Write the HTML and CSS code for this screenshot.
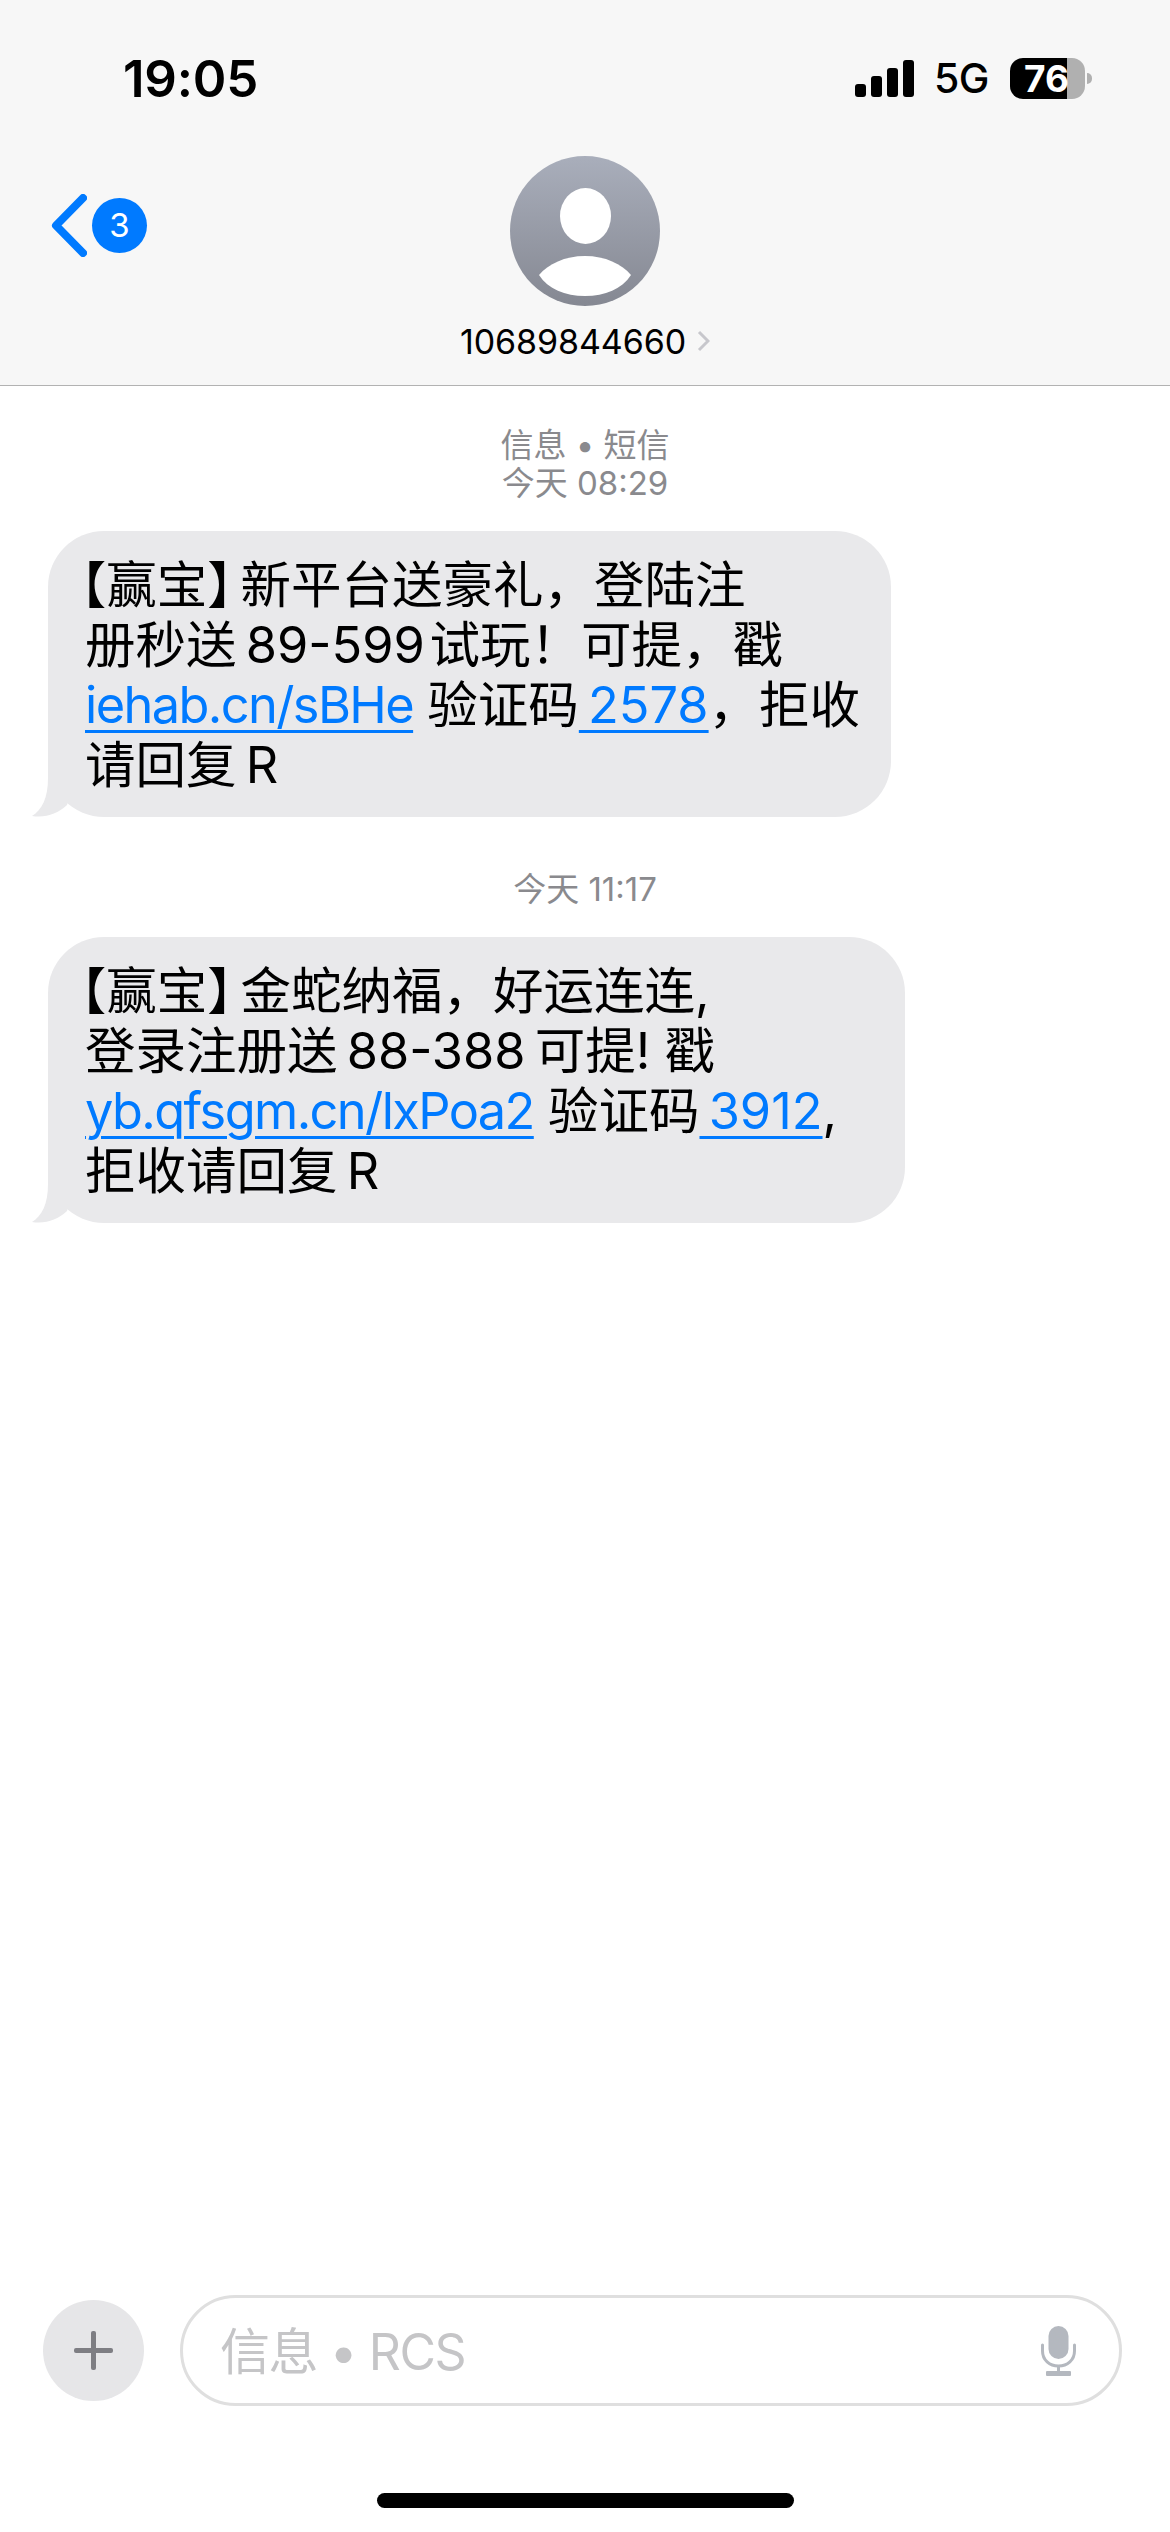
FILE: index.html
```html
<!DOCTYPE html>
<html lang="zh-CN">
<head>
    <meta charset="UTF-8">
    <meta name="viewport" content="width=device-width, initial-scale=1.0">
    <title>信息</title>
    <link rel="stylesheet" href="styles.css">
</head>
<body>
    <header class="top">
        <div class="status">
            <span class="time">19:05</span>
            <div class="status-right">
                <div class="signal"><i class="b1"></i><i class="b2"></i><i class="b3"></i><i class="b4"></i></div>
                <span class="net">5G</span>
                <div class="battery">76</div>
            </div>
        </div>
        <div class="nav">
            <div class="back">
                <svg class="chevron" width="36" height="63" viewBox="0 0 36 63"><polyline points="32,4 5,31.5 32,59" fill="none" stroke="#007aff" stroke-width="8" stroke-linecap="round" stroke-linejoin="round"/></svg>
                <span class="badge">3</span>
            </div>
            <div class="contact">
                <svg class="avatar" width="150" height="150" viewBox="0 0 150 150">
                    <defs><linearGradient id="avatar-bg" x1="0" y1="0" x2="0" y2="1"><stop offset="0" stop-color="#a9aebb"/><stop offset="1" stop-color="#858892"/></linearGradient></defs>
                    <circle cx="75" cy="75" r="75" fill="url(#avatar-bg)"/>
                    <ellipse cx="75.5" cy="60" rx="25.5" ry="28" fill="#fff"/>
                    <path d="M29 119 C38 108 55 100 75 100 C95 100 112 108 121 119 C112 133 95 140 75 140 C55 140 38 133 29 119 Z" fill="#fff"/>
                </svg>
                <div class="number">10689844660<svg class="number-arrow" width="13" height="22" viewBox="0 0 13 22"><polyline points="2,2 11,11 2,20" fill="none" stroke="#c7c7cc" stroke-width="3"/></svg></div>
            </div>
        </div>
    </header>

    <main class="thread">
        <p class="stamp stamp-first">信息 • 短信<br>今天 08:29</p>
        <div class="bubble bubble-a">
            <svg class="tail" width="40" height="60" viewBox="0 0 40 60"><path d="M16 0 V20 C16 40 10 52 0 58 C14 60 25 56 35 47 L40 30 V0 Z" fill="#e9e9eb"/></svg>
            <span class="tag">【赢宝】</span>新平台送豪礼，登陆注<br>
            册秒送&thinsp;89-599&hairsp;试玩！可提，戳<br>
            <a class="url" href="#">iehab.cn/sBHe</a> 验证码<a href="#">&thinsp;2578</a>，拒收<br>
            请回复&thinsp;R
        </div>
        <p class="stamp stamp-next">今天 11:17</p>
        <div class="bubble bubble-b">
            <svg class="tail" width="40" height="60" viewBox="0 0 40 60"><path d="M16 0 V20 C16 40 10 52 0 58 C14 60 25 56 35 47 L40 30 V0 Z" fill="#e9e9eb"/></svg>
            <span class="tag">【赢宝】</span>金蛇纳福，好运连连,<br>
            登录注册送&thinsp;88-388&thinsp;可提! 戳<br>
            <a class="url" href="#">yb.qfsgm.cn/lxPoa2</a> 验证码<a href="#">&thinsp;3912</a>,<br>
            拒收请回复&thinsp;R
        </div>
    </main>

    <footer class="composer">
        <div class="plus"><span></span></div>
        <div class="input">
            <span class="placeholder">信息 • RCS</span>
            <svg class="mic" width="35" height="50" viewBox="0 0 35 50">
                <rect x="7.5" y="0" width="20" height="33" rx="10" fill="#b4b8bf"/>
                <path d="M1.5 19 V25 C1.5 34 8.5 40 17.5 40 C26.5 40 33.5 34 33.5 25 V19" fill="none" stroke="#b4b8bf" stroke-width="3" stroke-linecap="round"/>
                <rect x="16" y="40" width="3" height="6" fill="#b4b8bf"/>
                <rect x="5" y="45" width="25" height="5" rx="1" fill="#b4b8bf"/>
            </svg>
        </div>
    </footer>
    <div class="home-bar"></div>
</body>
</html>
```

FILE: styles.css
```css
* { box-sizing: border-box; }
html, body { margin: 0; padding: 0; }
body { width: 1170px; height: 2532px; overflow: hidden; display: flex; flex-direction: column; background: #fff; color: #000; font-family: Inter, "Noto Sans CJK SC", sans-serif; }

.top { background: #f7f7f7; border-bottom: 1px solid #b2b2b2; height: 386px; }
.status { height: 156px; display: flex; justify-content: space-between; align-items: center; padding: 0 85px 0 123px; }
.time { font-size: 51px; font-weight: 600; letter-spacing: -0.2px; }
.status-right { display: flex; align-items: center; }
.signal { display: flex; align-items: flex-end; gap: 5px; height: 37px; margin-right: 20px; }
.signal i { display: block; width: 11px; background: #000; border-radius: 3px; }
.b1 { height: 13px; }
.b2 { height: 21px; }
.b3 { height: 29px; }
.b4 { height: 37px; }
.net { width: 55px; font-size: 41px; font-weight: 500; letter-spacing: -0.5px; margin-right: 21px; }
.battery { position: relative; width: 75px; height: 41px; line-height: 41px; padding-left: 14px; border-radius: 13px; background: linear-gradient(to right, #000 76%, #b0b0b0 76%); color: #fff; font-size: 37px; font-weight: 700; }
.battery::after { content: ""; position: absolute; left: 77px; top: 15px; width: 5px; height: 11px; border-radius: 0 5px 5px 0; background: #b0b0b0; }

.nav { display: grid; grid-template-columns: 1fr auto 1fr; }
.back { display: flex; align-items: center; align-self: start; gap: 5px; margin: 38px 0 0 51px; height: 63px; }
.badge { width: 55px; height: 55px; border-radius: 50%; background: #007aff; color: #fff; font-size: 33px; line-height: 55px; text-align: center; }
.contact { display: flex; flex-direction: column; align-items: center; }
.avatar { display: block; }
.number { display: flex; align-items: center; gap: 11px; margin-top: 15px; height: 40px; font-size: 34px; letter-spacing: -0.1px; }

.thread { flex: 1; padding: 0 0 0 48px; }
.stamp { margin: 0; color: #8a8a8e; font-size: 33px; line-height: 38px; text-align: center; width: 1074px; }
.stamp-first { margin-top: 40px; }
.stamp-next { margin-top: 53px; }
.bubble { position: relative; height: 286px; margin-top: 29px; padding: 24px 0 0 37px; border-radius: 56px; background: #e9e9eb; font-size: 50.5px; line-height: 60px; white-space: nowrap; text-spacing-trim: trim-start; }
.bubble-a { width: 843px; }
.bubble-b { width: 857px; }
.bubble a { color: #007aff; text-decoration: underline; text-decoration-thickness: 3px; text-underline-offset: 7px; }
.bubble a.url { letter-spacing: -1.6px; }
.tag { font-feature-settings: "halt"; margin: 0 8px 0 -4px; }
.tail { position: absolute; left: -16px; bottom: -1px; }

.composer { display: flex; align-items: center; gap: 36px; height: 111px; padding: 0 48px 0 43px; margin-bottom: 126px; }
.plus { width: 101px; height: 101px; flex: none; border-radius: 50%; background: #e6e6e8; display: flex; align-items: center; justify-content: center; }
.plus span { position: relative; display: block; width: 39px; height: 5px; border-radius: 2px; background: #7e7e83; }
.plus span::after { content: ""; position: absolute; left: 17px; top: -17px; width: 5px; height: 39px; border-radius: 2px; background: #7e7e83; }
.input { flex: 1; height: 111px; display: flex; align-items: center; justify-content: space-between; padding: 0 43px 0 37px; border: 3px solid #dfdfdf; border-radius: 56px; }
.placeholder { color: #c5c5c7; font-size: 50px; letter-spacing: -1.5px; padding-bottom: 6px; }
.mic { display: block; }

.home-bar { position: absolute; left: 377px; top: 2493px; width: 417px; height: 15px; border-radius: 8px; background: #000; }
```
